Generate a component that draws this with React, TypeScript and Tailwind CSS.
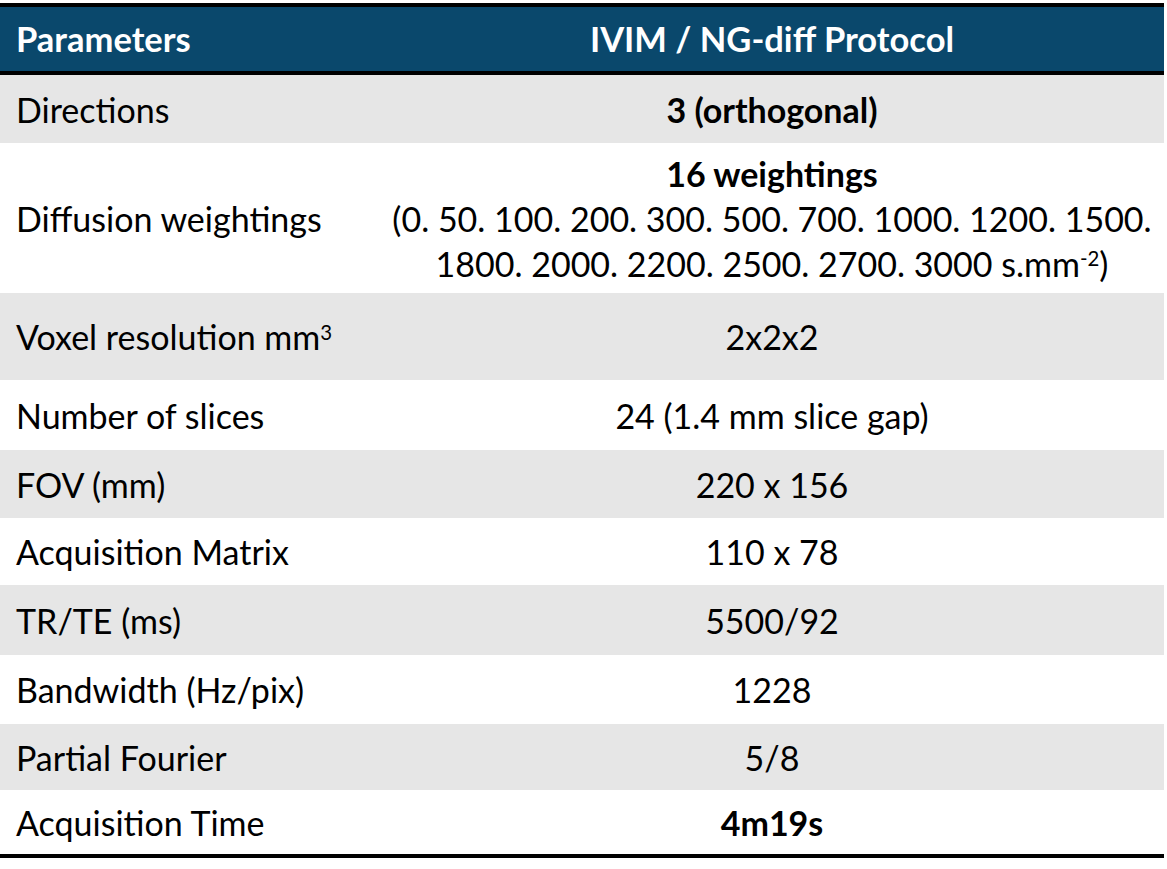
import React from 'react';

type Row = {
    label: React.ReactNode;
    value: React.ReactNode;
    h: string;
    shaded: boolean;
};

const font = { fontFamily: 'Lato, "Open Sans", sans-serif' };

const rows: Row[] = [
    { label: 'Directions', value: <span className="font-bold">3 (orthogonal)</span>, h: 'h-[68px]', shaded: true },
    {
        label: 'Diffusion weightings',
        value: (
            <div className="flex flex-col items-center leading-[45px]">
                <span className="font-bold">16 weightings</span>
                <span>(0. 50. 100. 200. 300. 500. 700. 1000. 1200. 1500.</span>
                <span>
                    1800. 2000. 2200. 2500. 2700. 3000 s.mm<sup className="text-[0.6em]">-2</sup>)
                </span>
            </div>
        ),
        h: 'h-[150px]',
        shaded: false,
    },
    {
        label: <>Voxel resolution mm<sup className="text-[0.6em]">3</sup></>,
        value: '2x2x2',
        h: 'h-[87px]',
        shaded: true,
    },
    { label: 'Number of slices', value: '24 (1.4 mm slice gap)', h: 'h-[70px]', shaded: false },
    { label: 'FOV (mm)', value: '220 x 156', h: 'h-[68px]', shaded: true },
    { label: 'Acquisition Matrix', value: '110 x 78', h: 'h-[67px]', shaded: false },
    { label: 'TR/TE (ms)', value: '5500/92', h: 'h-[70px]', shaded: true },
    { label: 'Bandwidth (Hz/pix)', value: '1228', h: 'h-[69px]', shaded: false },
    { label: 'Partial Fourier', value: '5/8', h: 'h-[66px]', shaded: true },
    { label: 'Acquisition Time', value: <span className="font-bold">4m19s</span>, h: 'h-[64px]', shaded: false },
];

export default function App() {
    return (
        <div className="w-[1167px] h-[869px] bg-white pt-[3px]" style={font}>
            <div className="w-[1164px] flex flex-col text-[34px] text-black border-b-4 border-black">
                {/* header */}
                <div className="grid grid-cols-[380px_1fr] h-[72px] bg-[#0a486c] border-y-4 border-black text-white font-bold text-[34.5px] items-center">
                    <div className="pl-4">Parameters</div>
                    <div className="text-center">IVIM / NG-diff Protocol</div>
                </div>

                {rows.map((r, i) => (
                    <div key={i}
                        className={`grid grid-cols-[380px_1fr] items-center ${r.h} ${r.shaded ? 'bg-[#e6e6e6]' : 'bg-white'}`}>
                        <div className="pl-4">{r.label}</div>
                        <div className="text-center">{r.value}</div>
                    </div>
                ))}
            </div>
        </div>
    );
}
